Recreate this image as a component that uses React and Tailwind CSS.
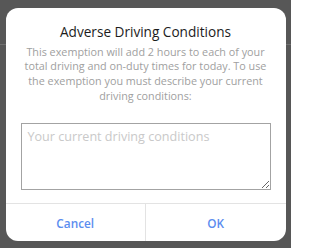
import { useState } from 'react';

function App() {
  const [conditions, setConditions] = useState('');

  return (
    <div
      className="relative h-[248px] w-[291px] overflow-hidden bg-[#575757]"
      style={{ fontFamily: '"Open Sans", "Noto Sans", sans-serif' }}
    >
      {/* app behind the overlay */}
      <div className="h-[45px] border-b border-[#707070]" />

      <div className="absolute inset-0 flex items-center justify-center">
        <div className="flex h-[233px] w-[280px] flex-col rounded-[12px] bg-white">
          <h2 className="pt-[14px] text-center text-[13.6px] leading-[19px] text-[#1c1c1c]">
            Adverse Driving Conditions
          </h2>
          <p className="mt-[4px] text-center text-[10.8px] leading-[14.7px] text-[#a0a0a0]">
            This exemption will add 2 hours to each of your
            <br />
            total driving and on-duty times for today. To use
            <br />
            the exemption you must describe your current
            <br />
            driving conditions:
          </p>
          <div className="px-[15px] pt-[20px]">
            <textarea
              value={conditions}
              onChange={(e) => setConditions(e.target.value)}
              placeholder="Your current driving conditions"
              className="block h-[67px] w-full border border-[#a3a3a3] px-[6px] py-[3px] text-[12.6px] leading-[20px] text-[#333] outline-none placeholder:text-[#c9c9c9]"
            />
          </div>
          <div className="mt-auto flex h-[38px] border-t border-[#e3e3e3]">
            <button className="flex-1 pt-[3px] text-[11.8px] font-semibold text-[#5b8def]">Cancel</button>
            <button className="flex-1 border-l border-[#e3e3e3] pt-[3px] text-[11.8px] font-semibold text-[#5b8def]">
              OK
            </button>
          </div>
        </div>
      </div>
    </div>
  );
}

export default App;
